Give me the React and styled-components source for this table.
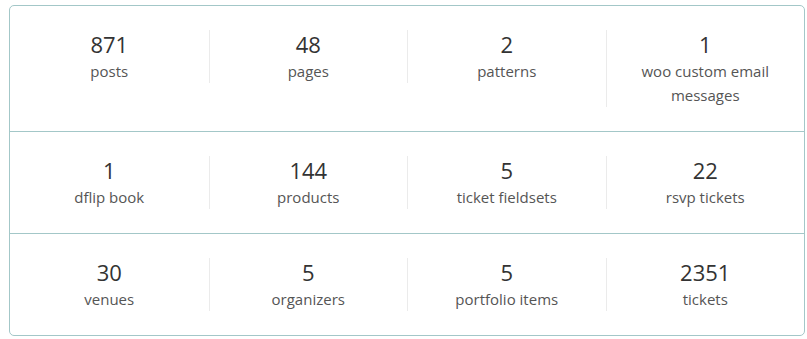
import React from "react";
import styled, { createGlobalStyle } from "styled-components";

const GlobalStyle = createGlobalStyle`
  body {
    margin: 0;
    padding: 5px 2px 0 9px;
    background: #fff;
    font-family: "Open Sans", "Noto Sans", sans-serif;
  }
`;

const rows = [
  [
    { count: 871, label: "posts" },
    { count: 48, label: "pages" },
    { count: 2, label: "patterns" },
    { count: 1, label: "woo custom email messages" },
  ],
  [
    { count: 1, label: "dflip book" },
    { count: 144, label: "products" },
    { count: 5, label: "ticket fieldsets" },
    { count: 22, label: "rsvp tickets" },
  ],
  [
    { count: 30, label: "venues" },
    { count: 5, label: "organizers" },
    { count: 5, label: "portfolio items" },
    { count: 2351, label: "tickets" },
  ],
];

const Card = styled.div`
  width: 796px;
  box-sizing: border-box;
  border: 1px solid #a3c7c8;
  border-radius: 5px;
  overflow: hidden;
`;

const Row = styled.div`
  display: grid;
  grid-template-columns: repeat(4, 1fr);
  align-items: start;
  padding: 24px 0;
  & + & {
    border-top: 1px solid #a3c7c8;
  }
`;

const Stat = styled.div`
  text-align: center;
  padding: 0 22px;
  & + & {
    border-left: 1px solid #ebebeb;
  }
`;

const Count = styled.div`
  font-size: 22px;
  line-height: 29px;
  color: #333;
`;

const Label = styled.div`
  font-size: 15px;
  line-height: 24px;
  color: #555;
`;

export default function App() {
  return (
    <>
      <GlobalStyle />
      <Card>
        {rows.map((row, i) => (
          <Row key={i}>
            {row.map((s) => (
              <Stat key={s.label}>
                <Count>{s.count}</Count>
                <Label>{s.label}</Label>
              </Stat>
            ))}
          </Row>
        ))}
      </Card>
    </>
  );
}
